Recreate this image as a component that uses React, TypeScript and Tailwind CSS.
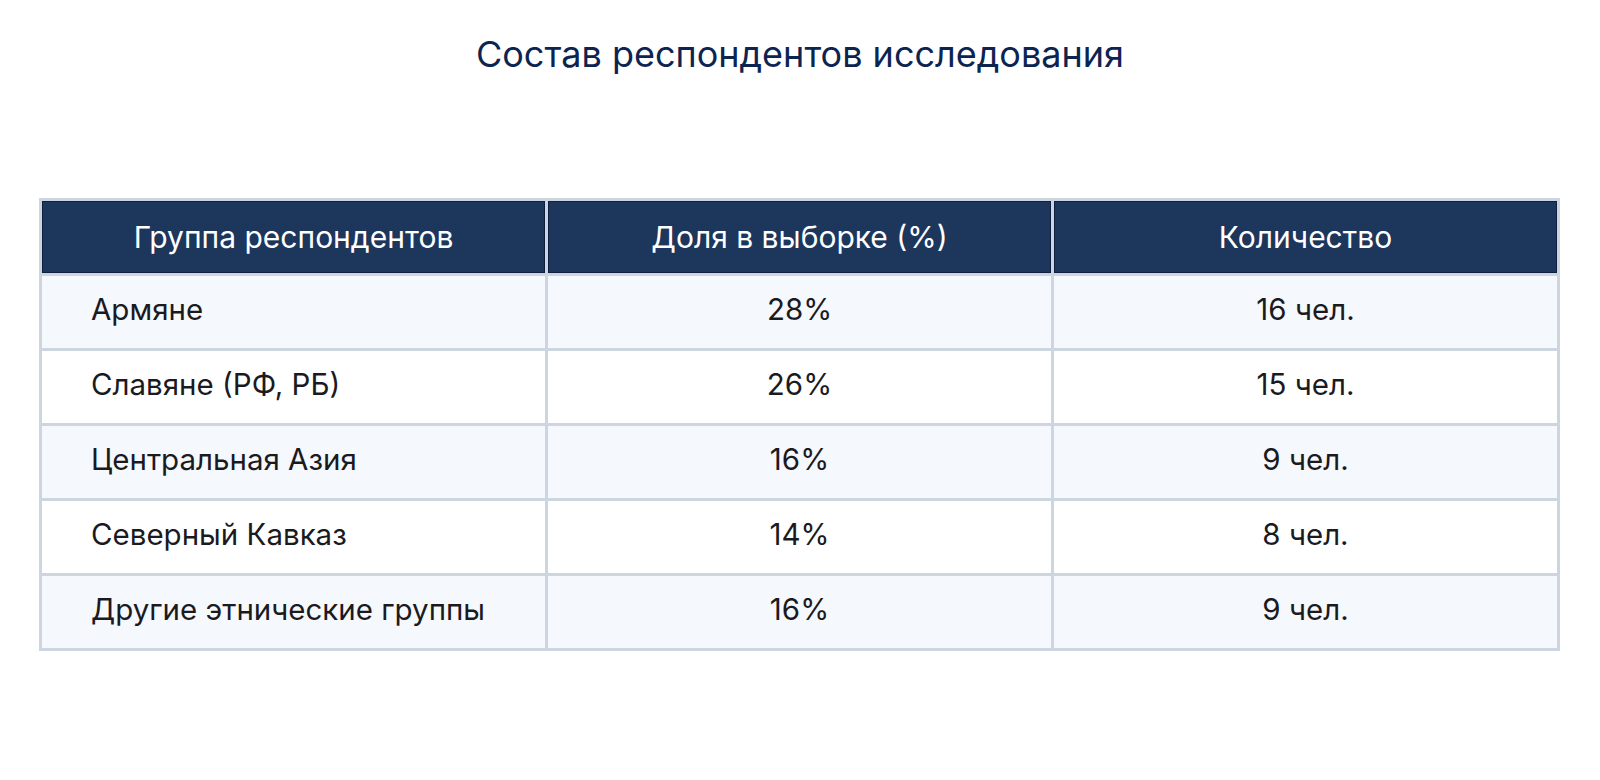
const rows = [
  { group: "Армяне", share: "28%", count: "16 чел." },
  { group: "Славяне (РФ, РБ)", share: "26%", count: "15 чел." },
  { group: "Центральная Азия", share: "16%", count: "9 чел." },
  { group: "Северный Кавказ", share: "14%", count: "8 чел." },
  { group: "Другие этнические группы", share: "16%", count: "9 чел." },
];

const headers = ["Группа респондентов", "Доля в выборке (%)", "Количество"];

export default function App() {
  return (
    <div className="w-[1600px] h-[780px] bg-white font-['Inter',sans-serif]">
      {/* Title */}
      <h1 className="pt-[32px] text-center text-[36px] leading-[44px] text-[#0d2451]">
        Состав респондентов исследования
      </h1>

      {/* Table */}
      <div className="pl-[39px] pr-[40px] pt-[122px]">
        <table className="w-full table-fixed border-collapse border-[3px] border-[#cdd5e0]">
          <thead>
            <tr>
              {headers.map((h) => (
                <th
                  key={h}
                  className="h-[75px] border-[3px] border-[#cdd5e0] bg-[#1d365c] shadow-[inset_0_0_0_1px_#0e1f3f] text-center text-[30px] font-normal text-white"
                >
                  {h}
                </th>
              ))}
            </tr>
          </thead>
          <tbody>
            {rows.map((r, i) => (
              <tr key={r.group} className={i % 2 === 0 ? "bg-[#f5f8fc]" : "bg-white"}>
                <td className="h-[75px] border-[3px] border-[#cdd5e0] pl-[49px] pb-[6px] text-left text-[29.5px] text-[#1a1a1f]">
                  {r.group}
                </td>
                <td className="h-[75px] border-[3px] border-[#cdd5e0] pb-[6px] text-center text-[29.5px] text-[#1a1a1f]">
                  {r.share}
                </td>
                <td className="h-[75px] border-[3px] border-[#cdd5e0] pb-[6px] text-center text-[29.5px] text-[#1a1a1f]">
                  {r.count}
                </td>
              </tr>
            ))}
          </tbody>
        </table>
      </div>
    </div>
  );
}
